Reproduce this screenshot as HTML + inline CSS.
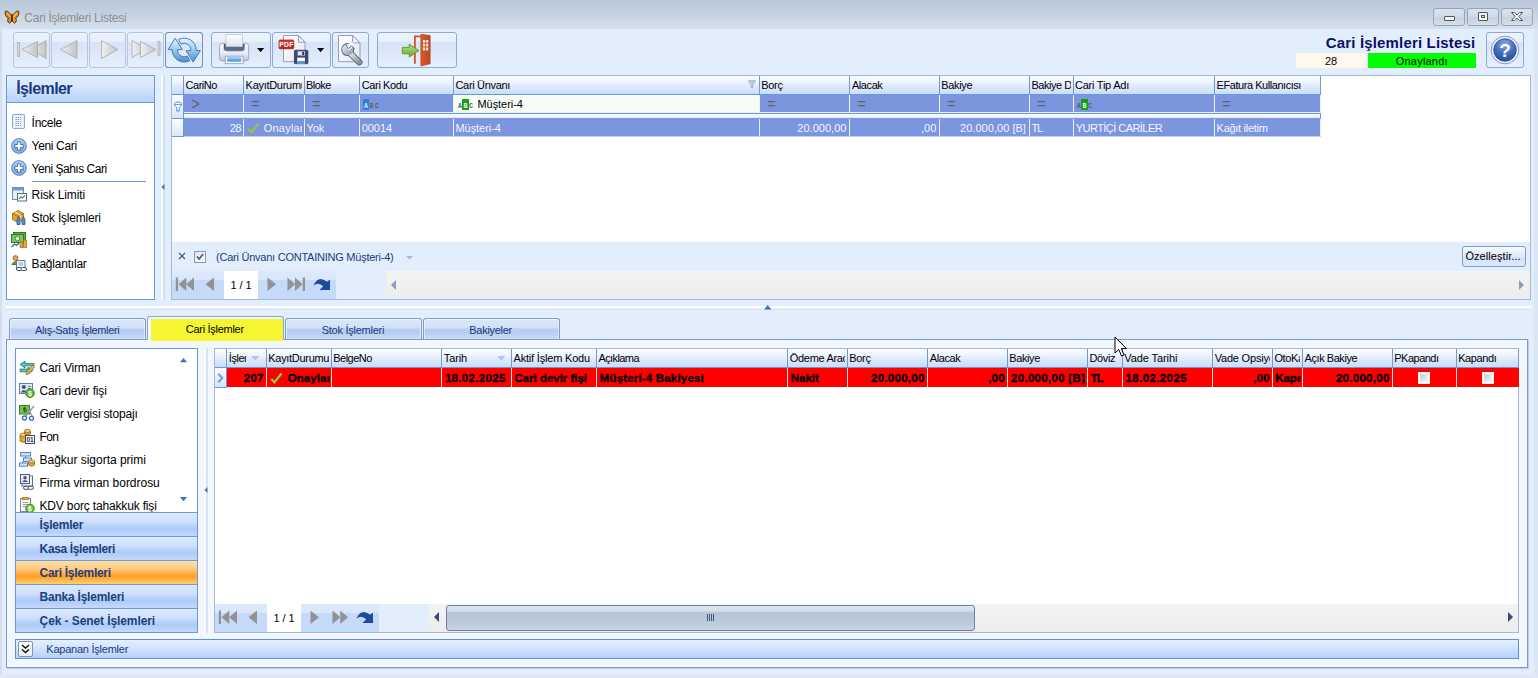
<!DOCTYPE html><html lang="tr"><head><meta charset="utf-8"><title>Cari İşlemleri Listesi</title><style>
*{box-sizing:border-box;margin:0;padding:0}
html,body{width:1538px;height:678px;overflow:hidden}
body{background:#e3eefd;font-family:"Liberation Sans",sans-serif;font-size:11px;color:#000;position:relative}
.a{position:absolute}
.t{position:absolute;white-space:nowrap;overflow:visible}
.tb{position:absolute;border:1px solid #a3bbdc;border-radius:3px;background:linear-gradient(#ecf3fd 0%,#e6effc 27%,#d5e4f8 28%,#dde9fa 60%,#e6effc 100%)}
.hd{position:absolute;top:0;height:18px;background:linear-gradient(#fbfdff 0%,#eef4fd 35%,#dce9fb 60%,#c9ddf9 100%);border-right:1px solid #6f9ad6}
.nav{position:absolute;left:16px;width:181px;height:24px;border-top:1px solid #6f9ad6;background:linear-gradient(#dbe8fc 0%,#cfe1fb 35%,#b3cff8 62%,#adcbf8 70%,#c4dafa 100%)}
.pg{position:absolute;top:0;height:28px;width:26px;background:linear-gradient(#dde9fb 0%,#d9e7fb 32%,#c4daf8 34%,#c6dbf8 100%)}
.tab{position:absolute;top:318px;height:21px;box-shadow:inset 1px 1px 0 rgba(255,255,255,.5),inset -1px 0 0 rgba(255,255,255,.5);border:1px solid #809cce;border-bottom:none;border-radius:3px 3px 0 0;background:linear-gradient(#dbe7f9 0%,#d3e2f8 40%,#b3ccf0 55%,#b9d0f2 75%,#cddef7 100%)}
.vs{position:absolute;width:1px;background:#e9f0fc}
</style></head><body>
<div class="a" style="left:0;top:0;width:1538px;height:29px;background:linear-gradient(#b9c7d9,#c5d2e1 50%,#d6e2ee)"></div>
<div class="a" style="left:0;top:29px;width:2px;height:649px;background:#d3dfee"></div>
<div class="a" style="left:1534px;top:29px;width:4px;height:649px;background:#dbe6f4"></div>
<div class="a" style="left:0;top:674px;width:1538px;height:4px;background:#dfe8f4"></div>
<svg class="a" style="left:4px;top:10px" width="16" height="14.5" viewBox="0 0 18 17"><path d="M9 8.5 C7.5 4 3.5 .5 1.2 1.5 C.3 4.5 2 8.5 5 9.5 C3.2 10.5 3.5 14.5 6.2 15.5 C8 14.5 9 12 9 9.5 Z" fill="#e8891a" stroke="#4a2806" stroke-width="1.1"/><path d="M9 8.5 C10.5 4 14.5 .5 16.8 1.5 C17.7 4.5 16 8.5 13 9.5 C14.8 10.5 14.5 14.5 11.8 15.5 C10 14.5 9 12 9 9.5 Z" fill="#f09a20" stroke="#4a2806" stroke-width="1.1"/><path d="M3.5 4 L7.5 8 M14.5 4 L10.5 8" stroke="#fbc060" stroke-width="1.2"/><rect x="8.4" y="4.5" width="1.2" height="9" fill="#2a1604"/></svg>
<div class="t" style="left:24.3px;top:10px;line-height:16px;height:16px;font-size:12px;color:#918d8d;letter-spacing:-0.24px">Cari İşlemleri Listesi</div>
<div class="a" style="left:1433px;top:8px;width:32px;height:18px;border:1px solid #95a4ba;border-radius:3px;background:linear-gradient(#dae4ef,#cedae7 50%,#c4d1e0 51%,#d4dfeb)"></div>
<div class="a" style="left:1467px;top:8px;width:32px;height:18px;border:1px solid #95a4ba;border-radius:3px;background:linear-gradient(#dae4ef,#cedae7 50%,#c4d1e0 51%,#d4dfeb)"></div>
<div class="a" style="left:1501px;top:8px;width:32px;height:18px;border:1px solid #95a4ba;border-radius:3px;background:linear-gradient(#dae4ef,#cedae7 50%,#c4d1e0 51%,#d4dfeb)"></div>
<div class="a" style="left:1444px;top:16px;width:11px;height:5px;border:1px solid #555;border-radius:1px;background:#f6f6f6"></div>
<div class="a" style="left:1478px;top:12px;width:10px;height:9px;border:1px solid #555;border-radius:1px;background:#f6f6f6"></div><div class="a" style="left:1481px;top:15px;width:4px;height:3px;border:1px solid #555;background:#cfd9e5"></div>
<svg class="a" style="left:1510px;top:11px" width="14" height="11" viewBox="0 0 14 11"><path d="M1.5 1.5 L4.5 1.5 L7 4 L9.5 1.5 L12.5 1.5 L8.8 5.5 L12.5 9.5 L9.5 9.5 L7 7 L4.5 9.5 L1.5 9.5 L5.2 5.5 Z" fill="#f6f6f6" stroke="#555" stroke-width="1"/></svg>
<div class="tb" style="left:13px;top:32px;width:37px;height:36px;border-color:#b6c5dc"></div>
<div class="tb" style="left:51px;top:32px;width:37px;height:36px;border-color:#b6c5dc"></div>
<div class="tb" style="left:89px;top:32px;width:37px;height:36px;border-color:#b6c5dc"></div>
<div class="tb" style="left:127px;top:32px;width:37px;height:36px;border-color:#b6c5dc"></div>
<div class="tb" style="left:165px;top:32px;width:38px;height:36px;border-color:#8fa9d4"></div>
<div class="tb" style="left:211px;top:32px;width:60px;height:36px;border-color:#8fa9d4"></div>
<div class="tb" style="left:272px;top:32px;width:59px;height:36px;border-color:#8fa9d4"></div>
<div class="tb" style="left:332px;top:32px;width:37px;height:36px;border-color:#8fa9d4"></div>
<div class="tb" style="left:377px;top:32px;width:80px;height:36px;border-color:#8fa9d4"></div>
<div class="tb" style="left:1486px;top:32px;width:38px;height:36px;border-color:#8fa9d4"></div>
<div class="a" style="left:165px;top:32px;width:38px;height:36px;border:1px solid #6f92c8;border-radius:3px"></div>
<svg class="a" style="left:13px;top:32px" width="37" height="36"><defs><linearGradient id="ng" x1="0" y1="0" x2="1" y2="0"><stop offset="0" stop-color="#f1f1f1"/><stop offset="1" stop-color="#c3c3c3"/></linearGradient></defs><rect x="4.5" y="10.5" width="2" height="14" fill="url(#ng)" stroke="#a8a8a8" stroke-width=".7"/><path d="M33 8.5 L18 17.5 L33 26.5 Z" fill="url(#ng)" stroke="#a8a8a8" stroke-width=".8"/><path d="M24.5 9.5 L9 17.5 L24.5 25.5 Z" fill="url(#ng)" stroke="#a8a8a8" stroke-width=".8"/></svg>
<svg class="a" style="left:51px;top:32px" width="37" height="36"><path d="M26 8.5 L9.5 17.5 L26 26.5 Z" fill="url(#ng)" stroke="#a8a8a8" stroke-width=".8"/></svg>
<svg class="a" style="left:89px;top:32px" width="37" height="36"><path d="M12.5 8.5 L29 17.5 L12.5 26.5 Z" fill="url(#ng)" stroke="#a8a8a8" stroke-width=".8"/></svg>
<svg class="a" style="left:127px;top:32px" width="37" height="36"><path d="M5 8.5 L20 17 L5 25.5 Z" fill="url(#ng)" stroke="#a8a8a8" stroke-width=".8"/><path d="M13.5 9.5 L29 17.5 L13.5 25.5 Z" fill="url(#ng)" stroke="#a8a8a8" stroke-width=".8"/><rect x="31" y="9.5" width="2" height="14" fill="url(#ng)" stroke="#a8a8a8" stroke-width=".7"/></svg>
<svg class="a" style="left:165px;top:32px" width="38" height="36" viewBox="0 0 38 36"><defs><linearGradient id="rg" gradientUnits="userSpaceOnUse" x1="0" y1="6" x2="0" y2="30"><stop offset="0" stop-color="#e2f2fc"/><stop offset=".45" stop-color="#a3cff0"/><stop offset="1" stop-color="#4a8fd0"/></linearGradient></defs><path d="M10.2 6.2 L17.3 17.4 L12.4 17.8 A6.8 6.8 0 0 0 22.39 24.1 L24.83 28.7 A12 12 0 0 1 7.2 17.8 L3.1 17.6 Z" fill="url(#rg)" stroke="#3571b4" stroke-width=".9" stroke-linejoin="round"/><path d="M28.2 30 L21.1 18.8 L26 18.4 A6.8 6.8 0 0 0 16.01 12.1 L13.57 7.5 A12 12 0 0 1 31.2 18.4 L35.3 18.6 Z" fill="url(#rg)" stroke="#3571b4" stroke-width=".9" stroke-linejoin="round"/></svg>
<svg class="a" style="left:211px;top:32px" width="60" height="36" viewBox="0 0 60 36"><defs><linearGradient id="pb" x1="0" y1="0" x2="0" y2="1"><stop offset="0" stop-color="#f7f8fc"/><stop offset=".6" stop-color="#e6e9f4"/><stop offset="1" stop-color="#b9c1dc"/></linearGradient><linearGradient id="pp" x1="0" y1="0" x2="0" y2="1"><stop offset="0" stop-color="#ffffff"/><stop offset="1" stop-color="#dfe2e8"/></linearGradient><linearGradient id="pd" x1="0" y1="0" x2="0" y2="1"><stop offset="0" stop-color="#3f4c6e"/><stop offset="1" stop-color="#6d7a9c"/></linearGradient></defs><rect x="8.5" y="11.2" width="29.2" height="17.7" rx="3.2" fill="url(#pb)" stroke="#98a2c0" stroke-width=".9"/><path d="M12.8 12 H33.6 V16.5 Q33.6 19.3 30 19.3 H16.4 Q12.8 19.3 12.8 16.5 Z" fill="url(#pd)"/><rect x="15" y="2.7" width="16.4" height="12" fill="url(#pp)" stroke="#bfc3cc" stroke-width=".8"/><rect x="14.3" y="24.2" width="17.8" height="7.5" fill="#fbfcfe" stroke="#8f9ab8" stroke-width=".8"/><rect x="16.2" y="25.6" width="14" height="4.2" fill="#5aa4ea"/><rect x="16.2" y="25.6" width="14" height="1.6" fill="#8cc4f4"/></svg>
<svg class="a" style="left:257px;top:48px" width="8" height="5"><path d="M0 0 L7.2 0 L3.6 4.2 Z" fill="#0a0a0a"/></svg>
<svg class="a" style="left:272px;top:32px" width="59" height="36" viewBox="0 0 59 36"><defs><linearGradient id="dg" x1="0" y1="0" x2="1" y2="1"><stop offset="0" stop-color="#ffffff"/><stop offset="1" stop-color="#e3e6f2"/></linearGradient><linearGradient id="rd" x1="0" y1="0" x2="0" y2="1"><stop offset="0" stop-color="#e03a3a"/><stop offset="1" stop-color="#b81a1a"/></linearGradient></defs><path d="M11.5 3.5 H26.4 L33 10.2 V29.7 H11.5 Z" fill="url(#dg)" stroke="#8d93b8" stroke-width=".9"/><path d="M26.4 3.5 V10.2 H33 Z" fill="#f4f5fa" stroke="#8d93b8" stroke-width=".9" stroke-linejoin="round"/><rect x="7" y="8" width="14.8" height="8.8" rx="1" fill="url(#rd)" stroke="#a31414" stroke-width=".7"/><text x="14.4" y="15" font-family="Liberation Sans,sans-serif" font-size="6.8" font-weight="bold" fill="#fff" text-anchor="middle" letter-spacing=".3">PDF</text><rect x="22.4" y="18.2" width="13.5" height="13.5" rx="1" fill="#3b486e" stroke="#252f4c" stroke-width=".7"/><rect x="25.6" y="19.3" width="7.4" height="4.2" fill="#dfe3ec"/><rect x="30.2" y="19.8" width="2" height="3.2" fill="#2c3654"/><rect x="25.2" y="25.6" width="7.8" height="5.8" fill="#fbfcfe"/><rect x="25.2" y="29" width="7.8" height="2.4" fill="#4f9be6"/></svg>
<svg class="a" style="left:317px;top:48px" width="8" height="5"><path d="M0 0 L7.2 0 L3.6 4.2 Z" fill="#0a0a0a"/></svg>
<svg class="a" style="left:332px;top:32px" width="37" height="36" viewBox="0 0 37 36"><defs><linearGradient id="wg" x1="0" y1="0" x2="1" y2="1"><stop offset="0" stop-color="#eef1f5"/><stop offset=".5" stop-color="#bcc4cf"/><stop offset="1" stop-color="#8893a3"/></linearGradient></defs><path d="M6.5 3.5 H20.6 L28 10.9 V29.7 H6.5 Z" fill="url(#dg)" stroke="#8d93b8" stroke-width=".9"/><path d="M20.6 3.5 V10.9 H28 Z" fill="#f4f5fa" stroke="#8d93b8" stroke-width=".9" stroke-linejoin="round"/><path d="M17 20 L27.3 30.3" stroke="#566274" stroke-width="6.4" stroke-linecap="round"/><circle cx="15.7" cy="17.6" r="6.5" fill="#566274"/><path d="M17 20 L27.3 30.3" stroke="url(#wg)" stroke-width="4.6" stroke-linecap="round"/><circle cx="15.7" cy="17.6" r="5.6" fill="url(#wg)"/><path d="M16.3 18.4 L13.8 14.6 L19.3 9 L23.8 13 Z" fill="#eceff7"/><path d="M13.7 12.3 L16.2 16.6 L19.6 14 L22.7 16.8" fill="none" stroke="#566274" stroke-width=".9"/></svg>
<svg class="a" style="left:377px;top:32px" width="80" height="36" viewBox="0 0 80 36"><defs><linearGradient id="ag" x1="0" y1="0" x2="0" y2="1"><stop offset="0" stop-color="#b4de78"/><stop offset="1" stop-color="#6aa82c"/></linearGradient><linearGradient id="og" x1="0" y1="0" x2="1" y2="0"><stop offset="0" stop-color="#dd5a2c"/><stop offset="1" stop-color="#bf4620"/></linearGradient></defs><path d="M37.9 31.8 V4.3 H44.5" fill="none" stroke="#d2552a" stroke-width="1.8"/><path d="M43.8 2.3 L53.2 3.4 V31.8 L43.8 33.9 Z" fill="url(#og)" stroke="#b8421c" stroke-width=".6"/><path d="M46 8 H48.2 V10.8 H46 Z M49.1 8 H51.3 V10.8 H49.1 Z M46 11.8 H48.2 V14.6 H46 Z M49.1 11.8 H51.3 V14.6 H49.1 Z M46 15.6 H48.2 V18.4 H46 Z M49.1 15.6 H51.3 V18.4 H49.1 Z" fill="#e3f2e2"/><path d="M25.3 15.4 H32.2 V12.3 L42 18.6 L32.2 25 V21.8 H25.3 Z" fill="url(#ag)" stroke="#5c9626" stroke-width=".9" stroke-linejoin="round"/></svg>
<svg class="a" style="left:1486px;top:32px" width="38" height="36" viewBox="0 0 38 36"><defs><radialGradient id="hg" cx=".5" cy=".25" r=".85"><stop offset="0" stop-color="#86a9e2"/><stop offset=".55" stop-color="#3e68b8"/><stop offset="1" stop-color="#25489a"/></radialGradient></defs><circle cx="19" cy="18" r="13.8" fill="#eef2f9" stroke="#8798b8" stroke-width="1"/><circle cx="19" cy="18" r="11.3" fill="url(#hg)" stroke="#2a4a90" stroke-width=".8"/><text x="19" y="24.8" font-family="Liberation Sans,sans-serif" font-size="19" font-weight="bold" fill="#fff" text-anchor="middle">?</text></svg>
<div class="t" style="left:1325.7px;top:33px;line-height:19px;height:19px;font-size:15px;font-weight:bold;color:#0c0f66;letter-spacing:0.17px">Cari İşlemleri Listesi</div>
<div class="a" style="left:1296px;top:53px;width:70px;height:15px;background:#fff8ee"></div>
<div class="t" style="left:1325px;top:54px;line-height:14px;height:14px;letter-spacing:-0.12px">28</div>
<div class="a" style="left:1368px;top:53px;width:108px;height:15px;background:#00ff00"></div>
<div class="t" style="left:1395.8px;top:54px;line-height:14px;height:14px;letter-spacing:0.2px">Onaylandı</div>
<div class="a" style="left:6px;top:75px;width:149px;height:225px;border:1px solid #6a98dc;background:#fff"></div>
<div class="a" style="left:7px;top:76px;width:147px;height:27px;background:linear-gradient(#e3eefd 0%,#d6e6fc 40%,#b7d3fa 100%);border-bottom:1px solid #6a98dc"></div>
<div class="t" style="left:16.2px;top:79px;line-height:19px;height:19px;font-size:16px;font-weight:bold;color:#1d3a7c;letter-spacing:-0.59px">İşlemler</div>
<svg class="a" style="left:11px;top:114px" width="16" height="16" viewBox="0 0 16 16"><rect x="1.5" y=".5" width="12" height="14" rx=".8" fill="#f4f8fd" stroke="#8aa6d2"/><rect x="2.5" y="1.5" width="10" height="12" fill="none" stroke="#dfe9f7" stroke-width=".8"/><path d="M4.5 3.5H10.5M4.5 5.5H10.5M4.5 7.5H10.5M4.5 9.5H10.5M4.5 11.5H10.5" stroke="#6890cc" stroke-width="1" stroke-dasharray="1.3 .9"/></svg>
<div class="t" style="left:31.6px;top:115px;line-height:16px;height:16px;font-size:12px;letter-spacing:-0.27px">İncele</div>
<svg class="a" style="left:11px;top:137.5px" width="16" height="16" viewBox="0 0 16 16"><defs><radialGradient id="pgr" cx=".5" cy=".3" r=".8"><stop offset="0" stop-color="#b4d6f6"/><stop offset="1" stop-color="#4a86cc"/></radialGradient></defs><circle cx="8" cy="8" r="7.3" fill="url(#pgr)" stroke="#3a6cb0" stroke-width=".9"/><circle cx="8" cy="8" r="6.2" fill="none" stroke="#cfe4f8" stroke-width=".7"/><path d="M6.6 3.8 H9.4 V6.6 H12.2 V9.4 H9.4 V12.2 H6.6 V9.4 H3.8 V6.6 H6.6 Z" fill="#fff" stroke="#2f63a8" stroke-width=".8"/></svg>
<div class="t" style="left:31.6px;top:138px;line-height:16px;height:16px;font-size:12px;letter-spacing:-0.35px">Yeni Cari</div>
<svg class="a" style="left:11px;top:160.3px" width="16" height="16" viewBox="0 0 16 16"><defs><radialGradient id="pgr" cx=".5" cy=".3" r=".8"><stop offset="0" stop-color="#b4d6f6"/><stop offset="1" stop-color="#4a86cc"/></radialGradient></defs><circle cx="8" cy="8" r="7.3" fill="url(#pgr)" stroke="#3a6cb0" stroke-width=".9"/><circle cx="8" cy="8" r="6.2" fill="none" stroke="#cfe4f8" stroke-width=".7"/><path d="M6.6 3.8 H9.4 V6.6 H12.2 V9.4 H9.4 V12.2 H6.6 V9.4 H3.8 V6.6 H6.6 Z" fill="#fff" stroke="#2f63a8" stroke-width=".8"/></svg>
<div class="t" style="left:31.6px;top:161px;line-height:16px;height:16px;font-size:12px;letter-spacing:-0.48px">Yeni Şahıs Cari</div>
<svg class="a" style="left:11px;top:186px" width="16" height="16" viewBox="0 0 16 16"><rect x="1.5" y="1.5" width="11" height="12" fill="#e8f0fb" stroke="#6b8fc4"/><rect x="2" y="2" width="10" height="2.5" fill="#6f9bdb"/><rect x="6.5" y="7.5" width="9" height="7.5" fill="#fff" stroke="#5a6a85"/><path d="M8 13 L10 10.8 L11.5 12 L14 9.3" stroke="#2f9a3a" fill="none" stroke-width="1.1"/></svg>
<div class="t" style="left:31.6px;top:187px;line-height:16px;height:16px;font-size:12px;letter-spacing:-0.12px">Risk Limiti</div>
<svg class="a" style="left:11px;top:209px" width="16" height="16" viewBox="0 0 16 16"><path d="M1.5 4.5 L7 1.5 L12.5 4.5 L12.5 10.5 L7 13.5 L1.5 10.5 Z" fill="#e4a534" stroke="#9a6a12" stroke-width=".8"/><path d="M1.5 4.5 L7 7.5 L12.5 4.5 M7 7.5 V13.5" stroke="#9a6a12" fill="none" stroke-width=".8"/><path d="M4 3 L9.5 6 V8.5" stroke="#f6dca0" fill="none" stroke-width="1.2"/><path d="M6 15.5 V11 L7.5 7.5 L9 11 V15.5 Z M11 15.5 V11 L12.5 7.5 L14 11 V15.5 Z" fill="#5d8ed0" stroke="#23478a" stroke-width=".7"/></svg>
<div class="t" style="left:31.6px;top:210px;line-height:16px;height:16px;font-size:12px;letter-spacing:-0.2px">Stok İşlemleri</div>
<svg class="a" style="left:11px;top:232px" width="16" height="16" viewBox="0 0 16 16"><rect x="2.5" y=".5" width="12" height="8" fill="#5fae45" stroke="#2f7a22"/><rect x=".5" y="2.5" width="12" height="8" fill="#7cc65e" stroke="#2f7a22"/><circle cx="6.5" cy="6.5" r="2.4" fill="#d6efc6" stroke="#2f7a22" stroke-width=".8"/><path d="M.5 15 L3.5 12 L5.5 13.5 L8 11" stroke="#3560c0" fill="none" stroke-width="1.3"/><path d="M9 10 H12 V15.5 H9 Z M12.5 8 H15.5 V15.5 H12.5 Z" fill="#eaa63c" stroke="#9a6a12" stroke-width=".7"/></svg>
<div class="t" style="left:31.6px;top:233px;line-height:16px;height:16px;font-size:12px;letter-spacing:-0.12px">Teminatlar</div>
<svg class="a" style="left:11px;top:255px" width="16" height="16" viewBox="0 0 16 16"><circle cx="4.5" cy="3" r="2.4" fill="#e9a45a" stroke="#8a5a20" stroke-width=".8"/><path d="M.8 9.5 Q4.5 3.5 8.2 9.5 Z" fill="#4fa04a" stroke="#2d6a2a" stroke-width=".8"/><rect x="5.5" y="5.5" width="8.5" height="8" fill="#f4f7fb" stroke="#6a7a95"/><path d="M7.5 8H12M7.5 10H12" stroke="#8a9ab5"/><rect x="5.5" y="12.5" width="5.5" height="3" rx="1.5" fill="#fff" stroke="#3d4a65"/><rect x="10" y="12.5" width="5.5" height="3" rx="1.5" fill="#fff" stroke="#3d4a65"/></svg>
<div class="t" style="left:31.6px;top:256px;line-height:16px;height:16px;font-size:12px;letter-spacing:-0.21px">Bağlantılar</div>
<div class="a" style="left:32px;top:181px;width:114px;height:1px;background:#6a98dc"></div>
<div class="a" style="left:161px;top:75px;width:4px;height:225px;background:linear-gradient(90deg,#fbfdff 0,#fbfdff 50%,#cddff8 51%,#d3e3f9 100%)"></div>
<svg class="a" style="left:161px;top:184px" width="4" height="6"><path d="M3.5 0 L.3 3 L3.5 6 Z" fill="#4a72b5"/></svg>
<div class="a" style="left:171px;top:75px;width:1360px;height:225px;border:1px solid #a3b8dc;background:#fff"></div>
<div class="a" style="left:172px;top:76px;width:1149px;height:19px;border-bottom:1px solid #6a98dc;overflow:hidden">
<div class="hd" style="left:0;width:12px"></div>
<div class="hd" style="left:12px;width:60px"><div class="a" style="left:0;top:0;width:57px;height:18px;overflow:hidden">
<div class="t" style="left:1.5px;top:2px;line-height:14px;height:14px;letter-spacing:-0.46px">CariNo</div>
</div></div>
<div class="hd" style="left:72px;width:61px"><div class="a" style="left:0;top:0;width:58px;height:18px;overflow:hidden">
<div class="t" style="left:1.6px;top:2px;line-height:14px;height:14px;letter-spacing:-0.29px">KayıtDurumu</div>
</div></div>
<div class="hd" style="left:133px;width:55px"><div class="a" style="left:0;top:0;width:52px;height:18px;overflow:hidden">
<div class="t" style="left:1px;top:2px;line-height:14px;height:14px;letter-spacing:-0.51px">Bloke</div>
</div></div>
<div class="hd" style="left:188px;width:94px"><div class="a" style="left:0;top:0;width:91px;height:18px;overflow:hidden">
<div class="t" style="left:1.8px;top:2px;line-height:14px;height:14px;letter-spacing:-0.38px">Cari Kodu</div>
</div></div>
<div class="hd" style="left:282px;width:306px"><div class="a" style="left:0;top:0;width:303px;height:18px;overflow:hidden">
<div class="t" style="left:1.5px;top:2px;line-height:14px;height:14px;letter-spacing:-0.33px">Cari Ünvanı</div>
</div></div>
<div class="hd" style="left:588px;width:90px"><div class="a" style="left:0;top:0;width:87px;height:18px;overflow:hidden">
<div class="t" style="left:1.2px;top:2px;line-height:14px;height:14px;letter-spacing:-0.28px">Borç</div>
</div></div>
<div class="hd" style="left:678px;width:90px"><div class="a" style="left:0;top:0;width:87px;height:18px;overflow:hidden">
<div class="t" style="left:1.9px;top:2px;line-height:14px;height:14px;letter-spacing:-0.41px">Alacak</div>
</div></div>
<div class="hd" style="left:768px;width:90px"><div class="a" style="left:0;top:0;width:87px;height:18px;overflow:hidden">
<div class="t" style="left:1.2px;top:2px;line-height:14px;height:14px;letter-spacing:-0.31px">Bakiye</div>
</div></div>
<div class="hd" style="left:858px;width:44px"><div class="a" style="left:0;top:0;width:41px;height:18px;overflow:hidden">
<div class="t" style="left:1.4px;top:2px;line-height:14px;height:14px;letter-spacing:-0.46px">Bakiye Dövizi</div>
</div></div>
<div class="hd" style="left:902px;width:141px"><div class="a" style="left:0;top:0;width:138px;height:18px;overflow:hidden">
<div class="t" style="left:1px;top:2px;line-height:14px;height:14px;letter-spacing:-0.24px">Cari Tip Adı</div>
</div></div>
<div class="hd" style="left:1043px;width:106px"><div class="a" style="left:0;top:0;width:103px;height:18px;overflow:hidden">
<div class="t" style="left:1.6px;top:2px;line-height:14px;height:14px;letter-spacing:-0.45px">EFatura Kullanıcısı</div>
</div></div>
</div>
<svg class="a" style="left:748px;top:80px" width="8" height="8"><path d="M.5 .8 Q4 -.6 7.5 .8 L7.5 2 L5 4.5 V7.5 H3 V4.5 L.5 2 Z" fill="#bccadf" stroke="#93a6c6" stroke-width=".6"/></svg>
<div class="a" style="left:172px;top:95px;width:12px;height:24px;background:linear-gradient(#fdfeff,#d9e7fb);border-right:1px solid #6a98dc;border-bottom:1px solid #6a98dc"></div>
<div class="a" style="left:172px;top:119px;width:12px;height:18px;background:linear-gradient(#fdfeff,#d9e7fb);border-right:1px solid #6a98dc;border-bottom:1px solid #6a98dc"></div>
<svg class="a" style="left:173px;top:101px" width="10" height="11" viewBox="0 0 10 11"><path d="M1.5 2.8 Q1.5 1 5 1 Q8.5 1 8.5 2.8 L8.5 4.2 L6.3 6.5 V10 H3.7 V6.5 L1.5 4.2 Z" fill="#fff" stroke="#4f8fe0" stroke-width="1"/><path d="M1.5 3.6 H8.5" stroke="#4f8fe0" stroke-width=".9"/></svg>
<div class="a" style="left:184px;top:95px;width:1137px;height:17px;background:#7b95de"></div>
<div class="a" style="left:454px;top:95px;width:305px;height:18px;background:#f7fcf4"></div>
<div class="a" style="left:184px;top:112px;width:1137px;height:1px;background:#e9f0fc"></div>
<div class="a" style="left:184px;top:113px;width:1137px;height:5px;background:linear-gradient(#fdfeff,#dfeafb);border-top:1px solid #6a98dc;border-right:1px solid #6a98dc"></div>
<div class="a" style="left:184px;top:118px;width:1137px;height:18px;background:#7b95de"></div>
<div class="a" style="left:184px;top:136px;width:1137px;height:1px;background:#c3d0f1"></div>
<div class="vs" style="left:243px;top:95px;height:17px"></div><div class="vs" style="left:243px;top:119px;height:17px"></div>
<div class="vs" style="left:304px;top:95px;height:17px"></div><div class="vs" style="left:304px;top:119px;height:17px"></div>
<div class="vs" style="left:359px;top:95px;height:17px"></div><div class="vs" style="left:359px;top:119px;height:17px"></div>
<div class="vs" style="left:453px;top:95px;height:17px"></div><div class="vs" style="left:453px;top:119px;height:17px"></div>
<div class="vs" style="left:759px;top:95px;height:17px"></div><div class="vs" style="left:759px;top:119px;height:17px"></div>
<div class="vs" style="left:849px;top:95px;height:17px"></div><div class="vs" style="left:849px;top:119px;height:17px"></div>
<div class="vs" style="left:939px;top:95px;height:17px"></div><div class="vs" style="left:939px;top:119px;height:17px"></div>
<div class="vs" style="left:1029px;top:95px;height:17px"></div><div class="vs" style="left:1029px;top:119px;height:17px"></div>
<div class="vs" style="left:1073px;top:95px;height:17px"></div><div class="vs" style="left:1073px;top:119px;height:17px"></div>
<div class="vs" style="left:1214px;top:95px;height:17px"></div><div class="vs" style="left:1214px;top:119px;height:17px"></div>
<div class="vs" style="left:1320px;top:95px;height:17px"></div><div class="vs" style="left:1320px;top:119px;height:17px"></div>
<div class="t" style="left:191px;top:96px;font-size:19px;line-height:16px;height:16px;color:#5f6176;transform:scaleX(.8);transform-origin:0 0">&gt;</div>
<div class="t" style="left:251px;top:96px;font-size:15px;line-height:16px;height:16px;color:#5f6176">=</div>
<div class="t" style="left:312px;top:96px;font-size:15px;line-height:16px;height:16px;color:#5f6176">=</div>
<div class="t" style="left:767px;top:96px;font-size:15px;line-height:16px;height:16px;color:#5f6176">=</div>
<div class="t" style="left:857px;top:96px;font-size:15px;line-height:16px;height:16px;color:#5f6176">=</div>
<div class="t" style="left:947px;top:96px;font-size:15px;line-height:16px;height:16px;color:#5f6176">=</div>
<div class="t" style="left:1037px;top:96px;font-size:15px;line-height:16px;height:16px;color:#5f6176">=</div>
<div class="t" style="left:1222px;top:96px;font-size:15px;line-height:16px;height:16px;color:#5f6176">=</div>
<svg class="a" style="left:363px;top:99px" width="17" height="11" viewBox="0 0 17 11"><rect x="0" y="0" width="6" height="11" fill="#2f7de0"/><text x="3" y="8.6" font-family="Liberation Mono,monospace" font-size="6.5" font-weight="bold" fill="#dfeaff" text-anchor="middle">A</text><text x="8.5" y="8.6" font-family="Liberation Mono,monospace" font-size="6.5" font-weight="bold" fill="#63605c" text-anchor="middle">B</text><text x="14" y="8.6" font-family="Liberation Mono,monospace" font-size="6.5" font-weight="bold" fill="#63605c" text-anchor="middle">C</text></svg>
<svg class="a" style="left:457px;top:99px" width="17" height="11" viewBox="0 0 17 11"><rect x="5" y="0" width="7" height="11" fill="#16a016"/><text x="3" y="8.6" font-family="Liberation Mono,monospace" font-size="6.5" font-weight="bold" fill="#5e5c58" text-anchor="middle">A</text><text x="8.5" y="8.6" font-family="Liberation Mono,monospace" font-size="6.5" font-weight="bold" fill="#e9ffe9" text-anchor="middle">B</text><text x="14" y="8.6" font-family="Liberation Mono,monospace" font-size="6.5" font-weight="bold" fill="#5e5c58" text-anchor="middle">C</text></svg>
<svg class="a" style="left:1076px;top:99px" width="17" height="11" viewBox="0 0 17 11"><rect x="5" y="0" width="7" height="11" fill="#16a016"/><text x="3" y="8.6" font-family="Liberation Mono,monospace" font-size="6.5" font-weight="bold" fill="#5e5c58" text-anchor="middle">A</text><text x="8.5" y="8.6" font-family="Liberation Mono,monospace" font-size="6.5" font-weight="bold" fill="#e9ffe9" text-anchor="middle">B</text><text x="14" y="8.6" font-family="Liberation Mono,monospace" font-size="6.5" font-weight="bold" fill="#5e5c58" text-anchor="middle">C</text></svg>
<div class="t" style="left:477.5px;top:97px;line-height:14px;height:14px;letter-spacing:-0.06px">Müşteri-4</div>
<div class="t" style="left:229.7px;top:121px;line-height:14px;height:14px;color:#f3f6fe;letter-spacing:-0.57px">28</div>
<svg class="a" style="left:247px;top:122px" width="13" height="12"><path d="M1.2 7 L4.5 10.3 L11.5 1.5" stroke="#93c83a" stroke-width="2.2" fill="none"/></svg>
<div class="a" style="left:262px;top:119px;width:40px;height:17px;overflow:hidden">
<div class="t" style="left:1.8px;top:2px;line-height:14px;height:14px;color:#f3f6fe;letter-spacing:0.2px">Onaylandı</div>
</div>
<div class="t" style="left:306.5px;top:121px;line-height:14px;height:14px;color:#f3f6fe;letter-spacing:-0.15px">Yok</div>
<div class="t" style="left:361.8px;top:121px;line-height:14px;height:14px;color:#f3f6fe;letter-spacing:-0.08px">00014</div>
<div class="t" style="left:455.5px;top:121px;line-height:14px;height:14px;color:#f3f6fe;letter-spacing:-0.06px">Müşteri-4</div>
<div class="t" style="left:797.3px;top:121px;line-height:14px;height:14px;color:#f3f6fe;letter-spacing:0.02px">20.000,00</div>
<div class="t" style="left:921px;top:121px;line-height:14px;height:14px;color:#f3f6fe;letter-spacing:0.03px">,00</div>
<div class="t" style="left:960px;top:121px;line-height:14px;height:14px;color:#f3f6fe;letter-spacing:0.04px">20.000,00 [B]</div>
<div class="t" style="left:1031.4px;top:121px;line-height:14px;height:14px;color:#f3f6fe;letter-spacing:-1.22px">TL</div>
<div class="t" style="left:1075.8px;top:121px;line-height:14px;height:14px;color:#f3f6fe;letter-spacing:-0.55px">YURTİÇİ CARİLER</div>
<div class="t" style="left:1216.6px;top:121px;line-height:14px;height:14px;color:#f3f6fe;letter-spacing:-0.29px">Kağıt iletim</div>
<div class="a" style="left:172px;top:242px;width:1358px;height:29px;background:#e3eefd"></div>
<svg class="a" style="left:178px;top:252px" width="8" height="8"><path d="M1 1 L7 7 M7 1 L1 7" stroke="#3f4f6f" stroke-width="1.1"/></svg>
<div class="a" style="left:194px;top:251px;width:12px;height:12px;border:1px solid #8a9bb5;background:linear-gradient(135deg,#dde2ea,#fff)"></div><svg class="a" style="left:196px;top:253px" width="8" height="8"><path d="M1 3.5 L3.2 6 L7 1" stroke="#46588f" stroke-width="1.6" fill="none"/></svg>
<div class="t" style="left:216px;top:250px;line-height:14px;height:14px;color:#1d3a7c;letter-spacing:-0.24px">(Cari Ünvanı CONTAINING Müşteri-4)</div>
<svg class="a" style="left:406px;top:256px" width="8" height="4"><path d="M0 0 H7 L3.5 3.5 Z" fill="#a9b9d3"/></svg>
<div class="a" style="left:1462px;top:246px;width:64px;height:21px;border:1px solid #7d9dcf;border-radius:3px;background:linear-gradient(#f7faff,#dfeafb 50%,#d0e0f9 51%,#dde9fb)"></div>
<div class="t" style="left:1465.4px;top:249px;line-height:14px;height:14px;letter-spacing:0.07px">Özelleştir...</div>
<div class="a" style="left:172px;top:271px;width:164px;height:28px;overflow:hidden">
<div class="pg" style="left:0px"></div>
<div class="pg" style="left:26px"></div>
<div class="pg" style="left:86px"></div>
<div class="pg" style="left:112px"></div>
<div class="pg" style="left:138px"></div>
<div class="a" style="left:52px;top:0;width:34px;height:28px;background:#fff"></div>
<div class="t" style="left:58.6px;top:7px;line-height:14px;height:14px;letter-spacing:-0.12px">1 / 1</div>
<svg class="a" style="left:3px;top:6px" width="20" height="15"><rect x=".8" y=".5" width="2.2" height="13.5" fill="#909294"/><path d="M11.3 .5 L3.5 7.2 L11.3 14 Z M19 .5 L11.3 7.2 L19 14 Z" fill="#909294"/></svg>
<svg class="a" style="left:33px;top:6px" width="10" height="15"><path d="M9 .5 L.5 7.2 L9 14 Z" fill="#909294"/></svg>
<svg class="a" style="left:95px;top:6px" width="10" height="15"><path d="M.5 .5 L9 7.2 L.5 14 Z" fill="#909294"/></svg>
<svg class="a" style="left:115px;top:6px" width="20" height="15"><path d="M.5 .5 L8 7.2 L.5 14 Z M8 .5 L15.5 7.2 L8 14 Z" fill="#909294"/><rect x="15.8" y=".5" width="2.2" height="13.5" fill="#909294"/></svg>
<svg class="a" style="left:141px;top:6px" width="20" height="14"><path d="M.5 8.5 Q5 -2.5 14.2 4.8 L17 2.5 V13 H6.5 L10.2 9.3 Q5.5 4.5 .5 8.5 Z" fill="#1d4c9c"/></svg>
</div>
<div class="a" style="left:336px;top:271px;width:50px;height:28px;background:#e3eefd"></div>
<div class="a" style="left:386px;top:271px;width:1144px;height:28px;background:linear-gradient(#f4f4f4,#ececec)"></div>
<svg class="a" style="left:391px;top:280px" width="6" height="10"><path d="M5 0 L0 5 L5 10 Z" fill="#8f9cb8"/></svg>
<svg class="a" style="left:1519px;top:280px" width="6" height="10"><path d="M0 0 L5 5 L0 10 Z" fill="#8f9cb8"/></svg>
<div class="a" style="left:6px;top:306px;width:1525px;height:4px;background:linear-gradient(#fff,#fcfdff 45%,#c7dcfa)"></div>
<svg class="a" style="left:764px;top:305px" width="8" height="5"><path d="M0 4.5 L3.7 0 L7.4 4.5 Z" fill="#3f6fb8"/></svg>
<div class="a" style="left:6px;top:339px;width:1522px;height:329px;border:1px solid #7f9ccf;background:#f2f6fd;box-shadow:1px 1px 1px #c3d1e8"></div>
<div class="tab" style="left:9px;width:137px"></div>
<div class="t" style="left:35px;top:323px;line-height:14px;height:14px;color:#1d3a7c;letter-spacing:-0.33px">Alış-Satış İşlemleri</div>
<div class="tab" style="left:285px;width:137px"></div>
<div class="t" style="left:321.7px;top:323px;line-height:14px;height:14px;color:#1d3a7c;letter-spacing:-0.25px">Stok İşlemleri</div>
<div class="tab" style="left:423px;width:137px"></div>
<div class="t" style="left:469.3px;top:323px;line-height:14px;height:14px;color:#1d3a7c;letter-spacing:-0.29px">Bakiyeler</div>
<div class="a" style="left:147px;top:316px;width:137px;height:24px;border:1px solid #89a6d6;border-bottom:none;border-radius:3px 3px 0 0;background:#f2f6fd"></div>
<div class="a" style="left:151px;top:319px;width:132px;height:22px;background:#f5f531"></div>
<div class="t" style="left:185.8px;top:322px;line-height:14px;height:14px;letter-spacing:-0.29px">Cari İşlemler</div>
<div class="a" style="left:15px;top:348px;width:183px;height:285px;border:1px solid #6a98dc;background:#fff"></div>
<div class="a" style="left:16px;top:349px;width:181px;height:163px;overflow:hidden">
<svg class="a" style="left:3px;top:10px" width="16" height="16" viewBox="0 0 16 16"><path d="M15 4.5 H6 V2 L1 5.5 L6 9 V6.8 H15 Z" fill="#5cc0b4" stroke="#1f7a70" stroke-width=".8"/><path d="M1 10 H9 V8 L14 11.5 L9 15 V12.8 H1 Z" fill="#5cc0b4" stroke="#1f7a70" stroke-width=".8"/><path d="M7.5 13.5 L13.5 6.5 L15.5 8.3 L9.5 15 L7 15.6 Z" fill="#f4b544" stroke="#8a5a10" stroke-width=".7"/></svg>
<div class="t" style="left:23.5px;top:11px;line-height:16px;height:16px;font-size:12px;letter-spacing:-0.19px">Cari Virman</div>
<svg class="a" style="left:3px;top:33px" width="16" height="16" viewBox="0 0 16 16"><rect x=".5" y="1.5" width="13" height="10" fill="#dfe8f6" stroke="#5f7fb4"/><circle cx="4.8" cy="5" r="2.1" fill="#4a5670"/><path d="M1.5 10.5 Q4.8 5.5 8 10.5 Z" fill="#4a5670"/><path d="M9 4.5H12M9 6.5H12" stroke="#7080a0"/><circle cx="11" cy="11.2" r="4.3" fill="#62b83c" stroke="#2f7a1a" stroke-width=".9"/><text x="11" y="13.9" font-size="7" font-weight="bold" fill="#fff" text-anchor="middle" font-family="Liberation Sans,sans-serif">$</text></svg>
<div class="t" style="left:23.5px;top:34px;line-height:16px;height:16px;font-size:12px;letter-spacing:-0.14px">Cari devir fişi</div>
<svg class="a" style="left:3px;top:56px" width="16" height="16" viewBox="0 0 16 16"><rect x=".5" y=".5" width="10" height="8.5" fill="#7cc04a" stroke="#3f7f2a"/><text x="5.5" y="7.2" font-size="7" font-weight="bold" fill="#1f4f10" text-anchor="middle" font-family="Liberation Sans,sans-serif">₺</text><path d="M15 1 L6.5 11.5 M9.5 5 L13.5 11.5" stroke="#8a93a8" stroke-width="1.3"/><circle cx="5.5" cy="13" r="2" fill="none" stroke="#3d6fc0" stroke-width="1.3"/><circle cx="12.5" cy="13.3" r="2" fill="none" stroke="#3d6fc0" stroke-width="1.3"/></svg>
<div class="t" style="left:23.5px;top:57px;line-height:16px;height:16px;font-size:12px;letter-spacing:-0.19px">Gelir vergisi stopajı</div>
<svg class="a" style="left:3px;top:79px" width="16" height="16" viewBox="0 0 16 16"><path d="M1 7 V13 Q4.5 16 8 13 V7" fill="#e9a534" stroke="#9a6a12" stroke-width=".8"/><ellipse cx="4.5" cy="7" rx="3.5" ry="1.9" fill="#f6c866" stroke="#9a6a12" stroke-width=".8"/><path d="M5.5 3 V6 Q8.5 8 11.5 6 V3" fill="#e9a534" stroke="#9a6a12" stroke-width=".8"/><ellipse cx="8.5" cy="3" rx="3" ry="1.7" fill="#f6c866" stroke="#9a6a12" stroke-width=".8"/><rect x="6.5" y="7.5" width="9" height="8" fill="#fff" stroke="#3d4a70"/><text x="11" y="14" font-size="6.5" font-weight="bold" fill="#1d2a50" text-anchor="middle" font-family="Liberation Sans,sans-serif">01</text></svg>
<div class="t" style="left:23.5px;top:80px;line-height:16px;height:16px;font-size:12px;letter-spacing:-0.63px">Fon</div>
<svg class="a" style="left:3px;top:102px" width="16" height="16" viewBox="0 0 16 16"><rect x="1.5" y="1.5" width="10" height="3.5" fill="#d3e3f7" stroke="#4f83c8"/><rect x="4.5" y="7" width="8" height="3.5" fill="#d3e3f7" stroke="#4f83c8"/><rect x=".5" y="12" width="8" height="3.2" fill="#d3e3f7" stroke="#4f83c8"/><path d="M6.5 5 V7 M3.5 10.5 V12" stroke="#4f83c8"/><path d="M9.5 10.5 V14 Q12.5 16.5 15.5 14 V10.5" fill="#e9a534" stroke="#9a6a12" stroke-width=".8"/><ellipse cx="12.5" cy="10.5" rx="3" ry="1.6" fill="#f6c866" stroke="#9a6a12" stroke-width=".8"/></svg>
<div class="t" style="left:23.5px;top:103px;line-height:16px;height:16px;font-size:12px;letter-spacing:-0.02px">Bağkur sigorta primi</div>
<svg class="a" style="left:3px;top:125px" width="16" height="16" viewBox="0 0 16 16"><rect x="3" y="2" width="10.5" height="10" fill="#f2f5fa" stroke="#66708a"/><rect x="1.5" y=".5" width="9" height="9" fill="#e3ebf7" stroke="#4f5f80"/><circle cx="6" cy="3.8" r="1.7" fill="#4a5670"/><path d="M3.2 8 Q6 4 8.8 8 Z" fill="#4a5670"/><rect x="4.5" y="12.3" width="5.5" height="3" rx="1.5" fill="#fff" stroke="#3d4a65"/><rect x="9" y="12.3" width="5.5" height="3" rx="1.5" fill="#fff" stroke="#3d4a65"/></svg>
<div class="t" style="left:23.5px;top:126px;line-height:16px;height:16px;font-size:12px;letter-spacing:-0.02px">Firma virman bordrosu</div>
<svg class="a" style="left:3px;top:148px" width="16" height="16" viewBox="0 0 16 16"><rect x="1.5" y="1.5" width="10" height="13" fill="#f6f8fb" stroke="#7a86a0"/><rect x="3.5" y=".3" width="6" height="2.4" fill="#f0a030" stroke="#a86a10" stroke-width=".6"/><path d="M3.5 5.5H9.5M3.5 7.5H9.5M3.5 9.5H7" stroke="#9aa6c0"/><circle cx="11" cy="11.5" r="4.3" fill="#72c22c" stroke="#3a7a10" stroke-width=".9"/><text x="11" y="14.2" font-size="7" font-weight="bold" fill="#fff" text-anchor="middle" font-family="Liberation Sans,sans-serif">₺</text></svg>
<div class="t" style="left:23.5px;top:149px;line-height:16px;height:16px;font-size:12px;letter-spacing:-0.16px">KDV borç tahakkuk fişi</div>
</div>
<svg class="a" style="left:180px;top:358px" width="8" height="5"><path d="M0 4.3 L3.5 0 L7 4.3 Z" fill="#3f6fb8"/></svg>
<svg class="a" style="left:180px;top:497px" width="8" height="5"><path d="M0 0 L7 0 L3.5 4.3 Z" fill="#3f6fb8"/></svg>
<div class="nav" style="top:512px"></div>
<div class="t" style="left:39.6px;top:517px;line-height:16px;height:16px;font-size:12px;font-weight:bold;color:#1e3e80;letter-spacing:-0.21px">İşlemler</div>
<div class="nav" style="top:536px"></div>
<div class="t" style="left:39.6px;top:541px;line-height:16px;height:16px;font-size:12px;font-weight:bold;color:#1e3e80;letter-spacing:-0.38px">Kasa İşlemleri</div>
<div class="nav" style="top:560px;background:linear-gradient(#ffdfa8 0%,#ffcf88 30%,#ffa531 62%,#ffa22c 68%,#ffd070 100%)"></div>
<div class="t" style="left:39.6px;top:565px;line-height:16px;height:16px;font-size:12px;font-weight:bold;color:#1e3e80;letter-spacing:-0.3px">Cari İşlemleri</div>
<div class="nav" style="top:584px"></div>
<div class="t" style="left:39.6px;top:589px;line-height:16px;height:16px;font-size:12px;font-weight:bold;color:#1e3e80;letter-spacing:-0.23px">Banka İşlemleri</div>
<div class="nav" style="top:608px"></div>
<div class="t" style="left:39.6px;top:613px;line-height:16px;height:16px;font-size:12px;font-weight:bold;color:#1e3e80;letter-spacing:-0.09px">Çek - Senet İşlemleri</div>
<div class="a" style="left:204px;top:348px;width:4px;height:285px;background:linear-gradient(90deg,#fbfdff 0,#fbfdff 50%,#d3e2f8 51%,#dbe7f9 100%)"></div>
<svg class="a" style="left:204px;top:487px" width="4" height="6"><path d="M3.5 0 L.3 3 L3.5 6 Z" fill="#4a72b5"/></svg>
<div class="a" style="left:214px;top:348px;width:1305px;height:285px;border:1px solid #a3b8dc;background:#fff"></div>
<div class="a" style="left:215px;top:349px;width:1304px;height:19px;border-bottom:1px solid #6a98dc;overflow:hidden">
<div class="hd" style="left:0;width:12px"></div>
<div class="hd" style="left:12px;width:40px"><div class="a" style="left:0;top:0;width:37px;height:18px;overflow:hidden">
<div class="a" style="left:0;top:0;width:18.80000000000001px;height:18px;overflow:hidden">
<div class="t" style="left:1.8px;top:2px;line-height:14px;height:14px;letter-spacing:-0.45px">İşlemNo</div>
</div>
</div></div>
<div class="hd" style="left:52px;width:65px"><div class="a" style="left:0;top:0;width:62px;height:18px;overflow:hidden">
<div class="t" style="left:1.3px;top:2px;line-height:14px;height:14px;letter-spacing:-0.3px">KayıtDurumu</div>
</div></div>
<div class="hd" style="left:117px;width:110px"><div class="a" style="left:0;top:0;width:107px;height:18px;overflow:hidden">
<div class="t" style="left:1.3px;top:2px;line-height:14px;height:14px;letter-spacing:-0.54px">BelgeNo</div>
</div></div>
<div class="hd" style="left:227px;width:70px"><div class="a" style="left:0;top:0;width:67px;height:18px;overflow:hidden">
<div class="t" style="left:1.8px;top:2px;line-height:14px;height:14px;letter-spacing:-0.13px">Tarih</div>
</div></div>
<div class="hd" style="left:297px;width:85px"><div class="a" style="left:0;top:0;width:82px;height:18px;overflow:hidden">
<div class="t" style="left:1.5px;top:2px;line-height:14px;height:14px;letter-spacing:-0.19px">Aktif İşlem Kodu</div>
</div></div>
<div class="hd" style="left:382px;width:191px"><div class="a" style="left:0;top:0;width:188px;height:18px;overflow:hidden">
<div class="t" style="left:1.4px;top:2px;line-height:14px;height:14px;letter-spacing:-0.58px">Açıklama</div>
</div></div>
<div class="hd" style="left:573px;width:60px"><div class="a" style="left:0;top:0;width:57px;height:18px;overflow:hidden">
<div class="t" style="left:1.8px;top:2px;line-height:14px;height:14px;letter-spacing:-0.32px">Ödeme Aracı</div>
</div></div>
<div class="hd" style="left:633px;width:80px"><div class="a" style="left:0;top:0;width:77px;height:18px;overflow:hidden">
<div class="t" style="left:1.2px;top:2px;line-height:14px;height:14px;letter-spacing:-0.28px">Borç</div>
</div></div>
<div class="hd" style="left:713px;width:80px"><div class="a" style="left:0;top:0;width:77px;height:18px;overflow:hidden">
<div class="t" style="left:1.8px;top:2px;line-height:14px;height:14px;letter-spacing:-0.41px">Alacak</div>
</div></div>
<div class="hd" style="left:793px;width:80px"><div class="a" style="left:0;top:0;width:77px;height:18px;overflow:hidden">
<div class="t" style="left:1.2px;top:2px;line-height:14px;height:14px;letter-spacing:-0.37px">Bakiye</div>
</div></div>
<div class="hd" style="left:873px;width:35px"><div class="a" style="left:0;top:0;width:32px;height:18px;overflow:hidden">
<div class="t" style="left:1.5px;top:2px;line-height:14px;height:14px;letter-spacing:-0.36px">Döviz</div>
</div></div>
<div class="hd" style="left:908px;width:90px"><div class="a" style="left:0;top:0;width:87px;height:18px;overflow:hidden">
<div class="t" style="left:1.2px;top:2px;line-height:14px;height:14px;letter-spacing:-0.08px">Vade Tarihi</div>
</div></div>
<div class="hd" style="left:998px;width:60px"><div class="a" style="left:0;top:0;width:57px;height:18px;overflow:hidden">
<div class="t" style="left:1.7px;top:2px;line-height:14px;height:14px;letter-spacing:-0.2px">Vade Opsiyonu</div>
</div></div>
<div class="hd" style="left:1058px;width:30px"><div class="a" style="left:0;top:0;width:27px;height:18px;overflow:hidden">
<div class="t" style="left:1.4px;top:2px;line-height:14px;height:14px;letter-spacing:-0.34px">OtoKapama</div>
</div></div>
<div class="hd" style="left:1088px;width:90px"><div class="a" style="left:0;top:0;width:87px;height:18px;overflow:hidden">
<div class="t" style="left:1.6px;top:2px;line-height:14px;height:14px;letter-spacing:-0.45px">Açık Bakiye</div>
</div></div>
<div class="hd" style="left:1178px;width:64px"><div class="a" style="left:0;top:0;width:61px;height:18px;overflow:hidden">
<div class="t" style="left:1.3px;top:2px;line-height:14px;height:14px;letter-spacing:-0.52px">PKapandı</div>
</div></div>
<div class="hd" style="left:1242px;width:62px"><div class="a" style="left:0;top:0;width:59px;height:18px;overflow:hidden">
<div class="t" style="left:1.2px;top:2px;line-height:14px;height:14px;letter-spacing:-0.4px">Kapandı</div>
</div></div>
</div>
<svg class="a" style="left:251px;top:356px" width="9" height="5"><path d="M0 0 H8.5 L4.25 4.8 Z" fill="#a5c8f8"/></svg>
<svg class="a" style="left:497px;top:356px" width="9" height="5"><path d="M0 0 H8.5 L4.25 4.8 Z" fill="#a5c8f8"/></svg>
<div class="a" style="left:215px;top:368px;width:12px;height:20px;background:linear-gradient(#fafcff,#d6e5fa);border-right:1px solid #6a98dc;border-bottom:1px solid #6a98dc"></div>
<svg class="a" style="left:217px;top:373px" width="7" height="10"><path d="M1.2 .8 L5.3 5 L1.2 9.2" stroke="#6b9fea" stroke-width="2" fill="none"/></svg>
<div class="a" style="left:227px;top:368px;width:1292px;height:19px;background:#fe0000"></div>
<div class="vs" style="left:266px;top:368px;height:19px;background:#f0dfe6"></div>
<div class="vs" style="left:331px;top:368px;height:19px;background:#f0dfe6"></div>
<div class="vs" style="left:441px;top:368px;height:19px;background:#f0dfe6"></div>
<div class="vs" style="left:511px;top:368px;height:19px;background:#f0dfe6"></div>
<div class="vs" style="left:596px;top:368px;height:19px;background:#f0dfe6"></div>
<div class="vs" style="left:787px;top:368px;height:19px;background:#f0dfe6"></div>
<div class="vs" style="left:847px;top:368px;height:19px;background:#f0dfe6"></div>
<div class="vs" style="left:927px;top:368px;height:19px;background:#f0dfe6"></div>
<div class="vs" style="left:1007px;top:368px;height:19px;background:#f0dfe6"></div>
<div class="vs" style="left:1087px;top:368px;height:19px;background:#f0dfe6"></div>
<div class="vs" style="left:1122px;top:368px;height:19px;background:#f0dfe6"></div>
<div class="vs" style="left:1212px;top:368px;height:19px;background:#f0dfe6"></div>
<div class="vs" style="left:1272px;top:368px;height:19px;background:#f0dfe6"></div>
<div class="vs" style="left:1302px;top:368px;height:19px;background:#f0dfe6"></div>
<div class="vs" style="left:1392px;top:368px;height:19px;background:#f0dfe6"></div>
<div class="vs" style="left:1456px;top:368px;height:19px;background:#f0dfe6"></div>
<div class="t" style="left:243.8px;top:371px;line-height:14px;height:14px;font-size:11.5px;font-weight:bold;letter-spacing:0.24px;-webkit-text-stroke:.3px #000">207</div>
<svg class="a" style="left:270px;top:372px" width="13" height="12"><path d="M1.2 7 L4.5 10.3 L11.5 1.5" stroke="#93c83a" stroke-width="2.2" fill="none"/></svg>
<div class="a" style="left:285px;top:369px;width:45px;height:18px;overflow:hidden">
<div class="t" style="left:2.8px;top:2px;line-height:14px;height:14px;font-size:11.5px;font-weight:bold;letter-spacing:0.04px;-webkit-text-stroke:.3px #000">Onaylandı</div>
</div>
<div class="t" style="left:444.9px;top:371px;line-height:14px;height:14px;font-size:11.5px;font-weight:bold;letter-spacing:0.32px;-webkit-text-stroke:.3px #000">18.02.2025</div>
<div class="t" style="left:514.5px;top:371px;line-height:14px;height:14px;font-size:11.5px;font-weight:bold;letter-spacing:-0.03px;-webkit-text-stroke:.3px #000">Cari devir fişi</div>
<div class="t" style="left:599.7px;top:371px;line-height:14px;height:14px;font-size:11.5px;font-weight:bold;letter-spacing:0.18px;-webkit-text-stroke:.3px #000">Müşteri-4 Bakiyesi</div>
<div class="t" style="left:790.7px;top:371px;line-height:14px;height:14px;font-size:11.5px;font-weight:bold;letter-spacing:0.03px;-webkit-text-stroke:.3px #000">Nakit</div>
<div class="t" style="left:871px;top:371px;line-height:14px;height:14px;font-size:11.5px;font-weight:bold;letter-spacing:0.28px;-webkit-text-stroke:.3px #000">20.000,00</div>
<div class="t" style="left:988.3px;top:371px;line-height:14px;height:14px;font-size:11.5px;font-weight:bold;letter-spacing:0.13px;-webkit-text-stroke:.3px #000">,00</div>
<div class="t" style="left:1011px;top:371px;line-height:14px;height:14px;font-size:11.5px;font-weight:bold;letter-spacing:0.3px;-webkit-text-stroke:.3px #000">20.000,00 [B]</div>
<div class="t" style="left:1090.5px;top:371px;line-height:14px;height:14px;font-size:11.5px;font-weight:bold;letter-spacing:-0.88px;-webkit-text-stroke:.3px #000">TL</div>
<div class="t" style="left:1125.6px;top:371px;line-height:14px;height:14px;font-size:11.5px;font-weight:bold;letter-spacing:0.38px;-webkit-text-stroke:.3px #000">18.02.2025</div>
<div class="t" style="left:1253.3px;top:371px;line-height:14px;height:14px;font-size:11.5px;font-weight:bold;letter-spacing:0.23px;-webkit-text-stroke:.3px #000">,00</div>
<div class="a" style="left:1273px;top:369px;width:28px;height:18px;overflow:hidden">
<div class="t" style="left:2.2px;top:2px;line-height:14px;height:14px;font-size:11.5px;font-weight:bold;letter-spacing:-0.09px;-webkit-text-stroke:.3px #000">Kapalı</div>
</div>
<div class="t" style="left:1335.9px;top:371px;line-height:14px;height:14px;font-size:11.5px;font-weight:bold;letter-spacing:0.28px;-webkit-text-stroke:.3px #000">20.000,00</div>
<div class="a" style="left:1418px;top:372px;width:12px;height:12px;background:#fff;border:1px solid #e8ecf2"></div><div class="a" style="left:1420px;top:374px;width:8px;height:8px;background:linear-gradient(135deg,#c9ced8,#f4f5f8)"></div>
<div class="a" style="left:1482px;top:372px;width:12px;height:12px;background:#fff;border:1px solid #e8ecf2"></div><div class="a" style="left:1484px;top:374px;width:8px;height:8px;background:linear-gradient(135deg,#c9ced8,#f4f5f8)"></div>
<div class="a" style="left:215px;top:604px;width:164px;height:28px;overflow:hidden">
<div class="pg" style="left:0px"></div>
<div class="pg" style="left:26px"></div>
<div class="pg" style="left:86px"></div>
<div class="pg" style="left:112px"></div>
<div class="pg" style="left:138px"></div>
<div class="a" style="left:52px;top:0;width:34px;height:28px;background:#fff"></div>
<div class="t" style="left:58.6px;top:7px;line-height:14px;height:14px;letter-spacing:-0.12px">1 / 1</div>
<svg class="a" style="left:3px;top:6px" width="20" height="15"><rect x=".8" y=".5" width="2.2" height="13.5" fill="#909294"/><path d="M11.3 .5 L3.5 7.2 L11.3 14 Z M19 .5 L11.3 7.2 L19 14 Z" fill="#909294"/></svg>
<svg class="a" style="left:33px;top:6px" width="10" height="15"><path d="M9 .5 L.5 7.2 L9 14 Z" fill="#909294"/></svg>
<svg class="a" style="left:95px;top:6px" width="10" height="15"><path d="M.5 .5 L9 7.2 L.5 14 Z" fill="#909294"/></svg>
<svg class="a" style="left:117px;top:6px" width="18" height="15"><path d="M.5 .5 L8.3 7.2 L.5 14 Z M8.3 .5 L16 7.2 L8.3 14 Z" fill="#909294"/></svg>
<svg class="a" style="left:141px;top:6px" width="20" height="14"><path d="M.5 8.5 Q5 -2.5 14.2 4.8 L17 2.5 V13 H6.5 L10.2 9.3 Q5.5 4.5 .5 8.5 Z" fill="#1d4c9c"/></svg>
</div>
<div class="a" style="left:379px;top:604px;width:50px;height:28px;background:#e3eefd"></div>
<div class="a" style="left:429px;top:604px;width:1089px;height:28px;background:linear-gradient(#f4f4f4,#ececec)"></div>
<svg class="a" style="left:434px;top:612px" width="6" height="10"><path d="M5 0 L0 5 L5 10 Z" fill="#39497a"/></svg>
<svg class="a" style="left:1508px;top:612px" width="6" height="10"><path d="M0 0 L5 5 L0 10 Z" fill="#39497a"/></svg>
<div class="a" style="left:446px;top:605px;width:529px;height:26px;border:1px solid #6b80a6;border-radius:3px;background:linear-gradient(#e0e6ef 0%,#d5dde9 22%,#b7c5d8 25%,#bac8da 65%,#c9d4e2 100%)"></div>
<div class="a" style="left:707px;top:614px;width:1px;height:7px;background:#44557a"></div>
<div class="a" style="left:709px;top:614px;width:1px;height:7px;background:#44557a"></div>
<div class="a" style="left:711px;top:614px;width:1px;height:7px;background:#44557a"></div>
<div class="a" style="left:713px;top:614px;width:1px;height:7px;background:#44557a"></div>
<div class="a" style="left:15px;top:639px;width:1504px;height:20px;border:1px solid #5f8fd8;background:linear-gradient(#e4effe,#d0e2fc 50%,#b3d1fb)"></div>
<div class="a" style="left:18px;top:641px;width:15px;height:16px;border:1px solid #8a93a5;border-radius:2px;background:linear-gradient(#fff,#e9eef6)"></div>
<svg class="a" style="left:21px;top:644px" width="9" height="10"><path d="M1 1 L4.5 4 L8 1 M1 5.5 L4.5 8.5 L8 5.5" stroke="#111" stroke-width="1.5" fill="none"/></svg>
<div class="t" style="left:46.3px;top:642px;line-height:14px;height:14px;color:#1d3a7c;letter-spacing:-0.24px">Kapanan İşlemler</div>
<svg class="a" style="left:1114px;top:336px" width="14" height="22" viewBox="0 0 14 22"><path d="M1 1 L1 17 L4.8 13.5 L7.5 20 L10 19 L7.3 12.6 L12.5 12.6 Z" fill="#fff" stroke="#000" stroke-width="1"/></svg>
</body></html>
